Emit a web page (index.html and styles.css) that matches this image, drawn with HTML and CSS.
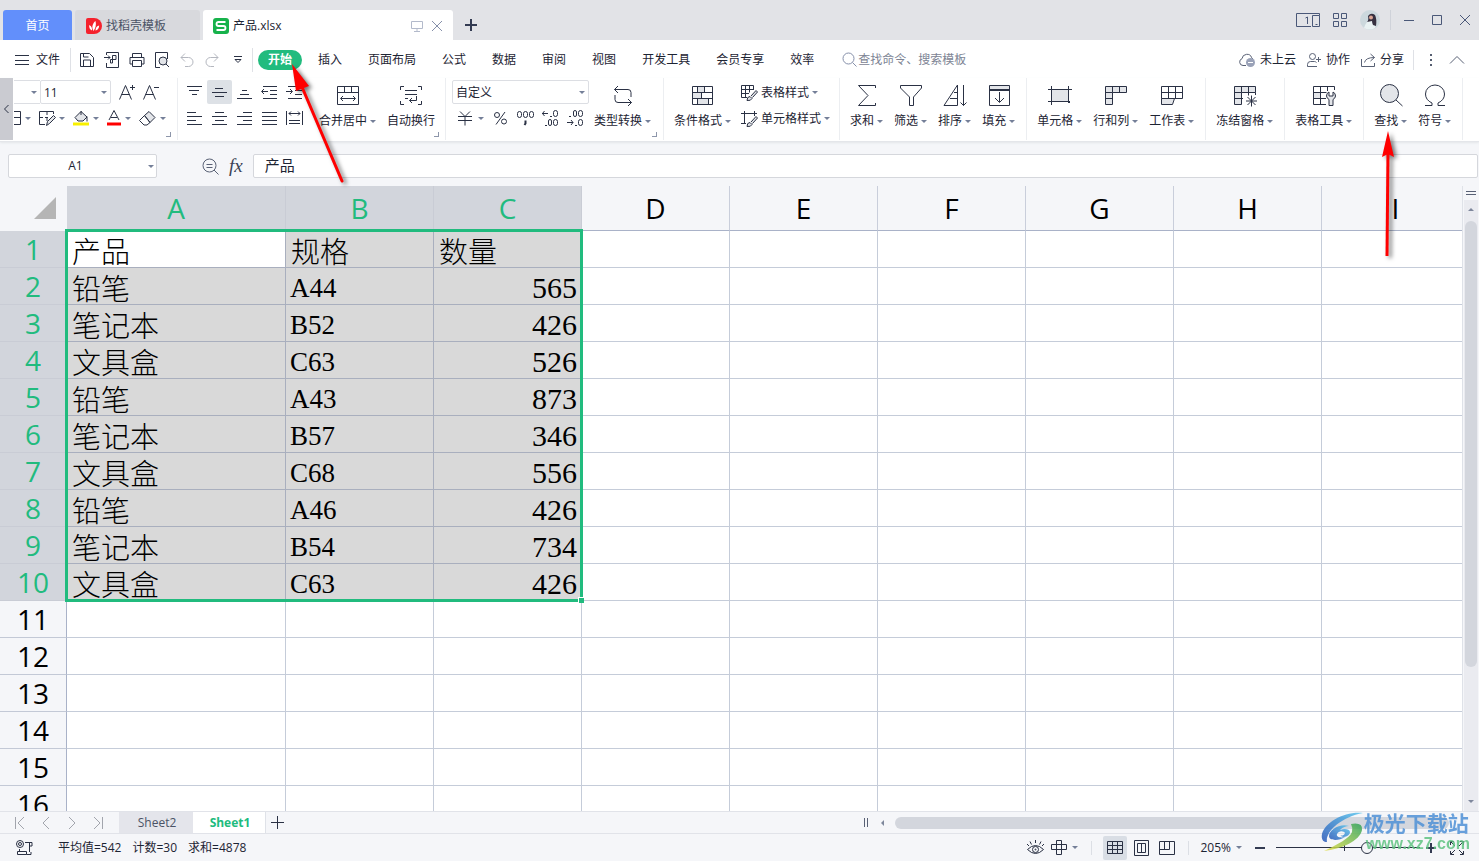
FILE: index.html
```html
<!DOCTYPE html>
<html lang="zh-CN">
<head>
<meta charset="utf-8">
<title>产品.xlsx</title>
<link rel="stylesheet" href="styles.css">
</head>
<body>
<header class="titlebar">
  <button class="doc-tab home">首页</button>
  <button class="doc-tab template"><svg width="16" height="16"><path d="M0 2q0-2 2-2h6a8 8 0 0 1 0 16H2q-2 0-2-2z" fill="#f5222d"/><path d="M7.500 13C5 9 7 5 9.500 3c1 4 0 7-2 10zM6 12.500C3.500 11.500 3 9 3.200 7 5.500 8 6.300 10 6 12.500zM9.500 12.500c0-3 1.500-4.500 3.700-5-.2 3-1.500 4.500-3.700 5z" fill="#fff"/></svg>找稻壳模板</button>
  <div class="doc-tab current">
    <svg width="16" height="16"><rect width="16" height="16" rx="3" fill="#17b24b"/><path d="M12.500 4H5.500q-2 0-2 2t2 2h5q2 0 2 2t-2 2h-7" fill="none" stroke="#fff" stroke-width="1.800"/></svg>
    <span class="doc-name">产品.xlsx</span>
    <svg class="ico pale" width="12" height="12"><path d="M.5 1.500h11v7H.5zM6 8.500v3M3 11.500h6"/></svg>
    <button class="plain" aria-label="关闭标签"><svg class="ico soft" width="12" height="12"><path d="M1 1l10 10M11 1L1 11"/></svg></button>
  </div>
  <button class="plain add-doc" aria-label="新建"><svg class="ico strong" width="12" height="12"><path d="M6 0v12M0 6h12"/></svg></button>
  <div class="window-tools">
    <svg class="ico slate" width="24" height="14"><path d="M15 13.500H.5V.5h23v2M11.500 4v7M9.500 5l2-1M16.500 2.500h7v11h-7zM19.500 11.500h2"/></svg>
    <svg class="ico slate" width="14" height="14"><path d="M.5.500h5v5h-5zM8.500.500h5v5h-5zM.5 8.500h5v5h-5zM8.500 8.500h5v5h-5z"/></svg>
    <svg class="avatar" width="20" height="20"><circle cx="10" cy="10" r="10" fill="#ccd8dd"/><path d="M4 18q2-7 7-8l5 3-1 5q-5 3-11 0z" fill="#e9f2f3"/><path d="M8 6q3-4 7-1 2 4 1 11l-3-1q-1-2-1-4l-5 1q2-2 1-6z" fill="#363040"/><circle cx="11" cy="7.500" r="2" fill="#dba695"/></svg>
    <span class="rule"></span>
    <button class="plain" aria-label="最小化"><svg class="ico slate" width="10" height="10"><path d="M0 5.500h10"/></svg></button>
    <button class="plain" aria-label="最大化"><svg class="ico slate" width="10" height="10"><path d="M.5.500h9v9h-9z"/></svg></button>
    <button class="plain" aria-label="关闭"><svg class="ico slate" width="10" height="10"><path d="M0 0l10 10M10 0L0 10"/></svg></button>
  </div>
</header>

<nav class="menubar">
  <button class="plain file"><svg class="ico" width="14" height="12"><path d="M0 1.500h14M0 6.500h14M0 10.500h14"/></svg>文件</button>
  <div class="quick">
    <button class="plain" aria-label="保存"><svg class="ico" width="16" height="16"><path d="M1.500 14.500v-13h9l4 4v9zM4.500 14v-6h7v6M4.500 2v3h5"/></svg></button>
    <button class="plain" aria-label="输出为PDF"><svg class="ico" width="16" height="16"><path d="M2.500 3V.5h12v15h-12V11M0 5.500h6M4 3.500l2 2-2 2M8.500 11V3.500H12v4H6.500v3.500h2"/></svg></button>
    <button class="plain" aria-label="打印"><svg class="ico" width="16" height="16"><path d="M3.500 5V1.500h9V5M3.500 12h-2.500V5.500h14V12h-2.500M3.500 8.500h9v6h-9z"/></svg></button>
    <button class="plain" aria-label="打印预览"><svg class="ico" width="16" height="16"><path d="M6 15.500H1.500V.5h12V7"/><circle cx="9" cy="9" r="4" fill="#e3e5e9"/><path d="M12 12l3 3"/></svg></button>
    <button class="plain" aria-label="撤销"><svg class="ico faded" width="14" height="14"><path d="M5 .5l-4 4 4 4M1 4.500h7.500a4.500 4.500 0 0 1 0 9H5"/></svg></button>
    <button class="plain" aria-label="恢复"><svg class="ico faded" width="14" height="14"><path d="M9 .5l4 4-4 4M13 4.500H5.500a4.500 4.500 0 0 0 0 9H9"/></svg></button>
    <button class="plain" aria-label="更多"><svg class="ico" width="8" height="8"><path d="M0 .500h8M1 3.500l3 3 3-3z"/></svg></button>
  </div>
  <div class="tabs">
    <button class="tab on">开始</button><button class="tab">插入</button><button class="tab">页面布局</button><button class="tab">公式</button><button class="tab">数据</button><button class="tab">审阅</button><button class="tab">视图</button><button class="tab">开发工具</button><button class="tab">会员专享</button><button class="tab">效率</button>
  </div>
  <label class="search"><svg class="ico soft" width="15" height="15"><circle cx="6.500" cy="6.500" r="5.500"/><path d="M10.500 10.500l4 4"/></svg><input type="text" placeholder="查找命令、搜索模板" aria-label="查找命令"></label>
  <div class="share">
    <button class="plain"><svg class="ico dim" width="17" height="16"><path d="M7 13.500H4a3.500 3.500 0 0 1-1-6.800 5 5 0 0 1 9.700-1l1.300 1.300"/><circle cx="11.500" cy="10.500" r="4.500" fill="#9aa2b8" stroke="none"/><path d="M9 10.500h5" stroke="#fff"/></svg>未上云</button>
    <button class="plain"><svg class="ico dim" width="15" height="14"><circle cx="5.500" cy="3.500" r="3"/><path d="M10 13.500H.5v-2q0-3 3-3h4q1 0 2 1M9 6.500h5M11.500 4v5"/></svg>协作</button>
    <button class="plain"><svg class="ico dim" width="15" height="14"><path d="M.5 6v7.500h13V10M3.500 9.500q1-5 10-5M9.500 1l4 3.500-4 3.500"/></svg>分享</button>
  </div>
  <div class="view-tools">
    <svg width="2" height="12" fill="#555d70"><path d="M0 0h2v2H0zM0 5h2v2H0zM0 10h2v2H0z"/></svg>
    <button class="plain" aria-label="收起功能区"><svg class="ico dim" width="14" height="8"><path d="M0 7.500l7-7 7 7"/></svg></button>
  </div>
</nav>

<section class="ribbon">
  <button class="scroll-left" aria-label="向左滚动"><svg class="ico" width="5" height="8"><path d="M4.500 0l-4 4 4 4"/></svg></button>
  <div class="group font-group">
    <div class="line">
      <span class="combo cut"><i class="caret"></i></span>
      <button class="combo size">11<i class="caret"></i></button>
      <button class="plain grow" aria-label="增大字号"><svg class="ico" width="16" height="16"><path d="M.5 15.500L6.500 1.500l6 14M2.500 10.500h8M11 3.500h5M13.500 1v5"/></svg></button>
      <button class="plain" aria-label="减小字号"><svg class="ico" width="16" height="16"><path d="M.5 15.500L6.500 1.500l6 14M2.500 10.500h8M11 3.500h5"/></svg></button>
    </div>
    <div class="line drops">
      <button class="plain" aria-label="边框"><svg class="ico" width="7" height="14"><path d="M0 .5h6.500v13H0M0 6.500h6"/></svg><i class="caret"></i></button>
      <button class="plain" aria-label="绘制边框"><svg class="ico" width="16" height="16"><path d="M6 14.500H.5v-13h14V4M8 2v3M8 8v3M1 7.500h3M6 7.500h3"/><path d="M7.500 15.500l1-4 6-6 2 2-6 6z" fill="#e3e5e9"/></svg><i class="caret"></i></button>
      <button class="plain" aria-label="填充颜色"><svg class="ico" width="16" height="16"><path d="M8 1.500l6 5.500-4 4H5L2 7.500zM8 1v4M14 6.500v5" fill="#e3e5e9"/><path d="M0 14h16" stroke="#f8f000" stroke-width="3"/></svg><i class="caret"></i></button>
      <button class="plain" aria-label="字体颜色"><svg class="ico" width="14" height="16"><path d="M2 10L7 .5l5 9.500M4 7.500h6"/><path d="M0 14h14" stroke="#f00" stroke-width="3"/></svg><i class="caret"></i></button>
      <button class="plain" aria-label="清除"><svg class="ico" width="17" height="16"><path d="M5.500 5.500L10 1.500l6 6-5 5z" fill="#e3e5e9"/><path d="M5.500 5.500l5.500 7-3 2.500H5L.500 10.500z"/></svg><i class="caret"></i></button>
    </div>
    <i class="corner"></i>
  </div>
  <div class="group align-group">
    <div class="stack">
      <div class="line">
        <button class="cell-btn" aria-label="顶端对齐"><svg class="ico" width="15" height="16"><path d="M0 2.500h15M2 6.500h10M5 10.500h5"/></svg></button>
        <button class="cell-btn on" aria-label="垂直居中"><svg class="ico" width="15" height="16"><path d="M3 4.500h8M0 8.500h15M3 12.500h9"/></svg></button>
        <button class="cell-btn" aria-label="底端对齐"><svg class="ico" width="15" height="16"><path d="M5 6.500h5M3 10.500h9M0 14.500h15"/></svg></button>
        <button class="cell-btn" aria-label="减少缩进"><svg class="ico" width="17" height="16"><path d="M2 2.500h14M9 6.500h7M9 10.500h7M2 14.500h14M1 7.500h6M3 5l-2.500 2.500L3 10"/></svg></button>
        <button class="cell-btn" aria-label="增加缩进"><svg class="ico" width="17" height="16"><path d="M2 2.500h14M9 6.500h7M9 10.500h7M2 14.500h14M0 7.500h6M4 5l2.500 2.500L4 10"/></svg></button>
      </div>
      <div class="line">
        <button class="cell-btn" aria-label="左对齐"><svg class="ico" width="15" height="16"><path d="M0 2.500h9M0 6.500h15M0 10.500h9M0 14.500h15"/></svg></button>
        <button class="cell-btn" aria-label="居中"><svg class="ico" width="15" height="16"><path d="M3 2.500h9M0 6.500h15M3 10.500h9M0 14.500h15"/></svg></button>
        <button class="cell-btn" aria-label="右对齐"><svg class="ico" width="15" height="16"><path d="M6 2.500h9M0 6.500h15M6 10.500h9M0 14.500h15"/></svg></button>
        <button class="cell-btn" aria-label="两端对齐"><svg class="ico" width="15" height="16"><path d="M0 2.500h15M0 6.500h15M0 10.500h15M0 14.500h15"/></svg></button>
        <button class="cell-btn" aria-label="分散对齐"><svg class="ico" width="17" height="16"><path d="M.5 1v14M16.500 1v14M3 3.500h11M5 1.500l-2 2 2 2M12 1.500l2 2-2 2M3 10.500h11M3 13.500h11"/></svg></button>
      </div>
    </div>
    <button class="big"><svg class="ico" width="24" height="24"><path d="M1.500 2.500h21v18h-21zM1.500 8.500h21M8.500 2.500v6M15.500 2.500v6M5 14.500h14M7 12l-2.500 2.500L7 17M17 12l2.500 2.500L17 17"/></svg><span>合并居中<i class="caret"></i></span></button>
    <button class="big"><svg class="ico" width="24" height="24"><path d="M5 2.500H1.500V6M19 2.500h3.500V6M1.500 17v3.500H5M22.500 17v3.500H19M6 6.500h12M6 10.500h12M6 14.500h3M17.500 12v4.500h-7M13 14l-2.500 2.500L13 19"/></svg><span>自动换行</span></button>
    <i class="corner"></i>
  </div>
  <div class="group number-group">
    <div class="stack">
      <button class="combo format">自定义<i class="caret"></i></button>
      <div class="line">
        <button class="plain money" aria-label="货币"><svg class="ico" width="14" height="16"><path d="M2 1.500l5 5 5-5M7 6v9.500M0 6.500h14M0 10.500h14"/></svg><i class="caret"></i></button>
        <button class="cell-btn" aria-label="百分比"><svg class="ico" width="13" height="14"><circle cx="3" cy="4" r="2.500"/><circle cx="10" cy="10.500" r="2.500"/><path d="M11 1L2 13.500"/></svg></button>
        <button class="cell-btn" aria-label="千位分隔"><svg class="ico" width="17" height="16"><rect x=".5" y="1.500" width="4" height="6" rx="2"/><rect x="6.500" y="1.500" width="4" height="6" rx="2"/><rect x="12.500" y="1.500" width="4" height="6" rx="2"/><path d="M8.500 10.500v3l-1 1.500" stroke-width="2"/></svg></button>
        <button class="cell-btn" aria-label="增加小数位"><svg class="ico" width="17" height="16"><path d="M0 3.500h6M2.500 1L.5 3.500l2 2.500M8 6.500h2M3 15.500h2"/><rect x="11.500" y=".5" width="4" height="6" rx="2"/><rect x="6.500" y="9.500" width="3" height="6" rx="1.500"/><rect x="11.500" y="9.500" width="4" height="6" rx="2"/></svg></button>
        <button class="cell-btn" aria-label="减少小数位"><svg class="ico" width="17" height="16"><path d="M0 12.500h6M4 10l2 2.500-2 2.500M2 6.500h2M8 15.500h2"/><rect x="6.500" y=".5" width="3" height="6" rx="1.500"/><rect x="11.500" y=".5" width="4" height="6" rx="2"/><rect x="11.500" y="9.500" width="4" height="6" rx="2"/></svg></button>
      </div>
    </div>
    <button class="big"><svg class="ico" width="24" height="24"><path d="M7 2L3.500 5.500 7 9M3.500 5.500H17q3 0 3 3V13M17 15l3.500 3.500L17 22M20.500 18.500H7q-3 0-3-3V11"/></svg><span>类型转换<i class="caret"></i></span></button>
    <i class="corner"></i>
  </div>
  <div class="group style-group">
    <button class="big"><svg class="ico" width="24" height="24"><path d="M7 2.500h6v6H7zM1.500 8.500h9v6h-9zM7 14.500h10v6H7z" fill="#e3e5e9" stroke="none"/><path d="M1.500 2.500h20v18h-20zM1.500 8.500h20M1.500 14.500h20M6.500 2.500v6M13.500 2.500v6M10.500 8.500v6M6.500 14.500v6M17.500 14.500v6"/></svg><span>条件格式<i class="caret"></i></span></button>
    <div class="stack styles-stack">
      <button class="plain wide"><svg class="ico" width="17" height="16"><path d="M6 12.500H.5V.5h12V5M.5 4.500h12M.5 8.500H8M4.500.500v12M8.500.500v7"/><path d="M6 15.500q0-4 3-4l2 2q-1 2.500-5 2zM10 11l5-5.500 1.500 1.500-5 5.500" fill="#e3e5e9"/></svg>表格样式<i class="caret"></i></button>
      <button class="plain wide"><svg class="ico" width="17" height="16"><path d="M3.500 0v12.500M0 2.500h16M13.500 0v5M0 12.500h5"/><path d="M6 15.500q0-4 3-4l2 2q-1 2.500-5 2zM10 11l5-5.500 1.500 1.500-5 5.500" fill="#e3e5e9"/></svg>单元格样式<i class="caret"></i></button>
    </div>
  </div>
  <div class="group">
    <button class="big"><svg class="ico" width="24" height="24"><path d="M20.500 4V1.500h-17L13 11.500l-9.500 10h17V19"/></svg><span>求和<i class="caret"></i></span></button>
    <button class="big"><svg class="ico" width="24" height="24"><path d="M1.500 1.500h21V4L14.500 13v8.500h-4V13L1.500 4z"/></svg><span>筛选<i class="caret"></i></span></button>
    <button class="big"><svg class="ico" width="24" height="24"><path d="M14.500 1v20.500H1L14.500 1zM11 8.500h3M7 14.500h7M20.500 1v20.500M17.500 18.500l3 3 3-3"/></svg><span>排序<i class="caret"></i></span></button>
    <button class="big"><svg class="ico" width="24" height="24"><path d="M2.500 1.500h20v5h-20z" fill="#e3e5e9"/><path d="M2.500 5.500h20v16h-20zM12.500 8v10M8 14l4.500 4.500L17 14"/></svg><span>填充<i class="caret"></i></span></button>
  </div>
  <div class="group">
    <button class="big"><svg class="ico" width="24" height="24"><path d="M3.500 5.500h17v12h-17z" fill="#e3e5e9"/><path d="M3.500 2v19M20.500 2v13M0 5.500h24M0 17.500h18"/><path d="M20 17h2v2h-2z" fill="#2a3144" stroke="none"/></svg><span>单元格<i class="caret"></i></span></button>
    <button class="big"><svg class="ico" width="24" height="24"><path d="M1.500 2.500h21v6h-14v12h-7z" fill="#e3e5e9"/><path d="M1.500 8.500h7v-6M15.500 2.500v6M1.500 14.500h7"/></svg><span>行和列<i class="caret"></i></span></button>
    <button class="big"><svg class="ico" width="24" height="24"><path d="M1.500 2.500h21v12h-21zM8.500 2.500v12M15.500 2.500v12M1.500 8.500h21"/><path d="M1.500 14.500h13l-2 6h-11z" fill="#e3e5e9"/></svg><span>工作表<i class="caret"></i></span></button>
  </div>
  <div class="group">
    <button class="big"><svg class="ico" width="24" height="24"><path d="M1.500 2.500h21v6h-14v12h-7z" fill="#e3e5e9"/><path d="M22.500 8.500V11M1.500 8.500h7v-6M15.500 2.500v9M1.500 14.500H10M18.500 11.500v11M13 17h11M14.500 13l8 8M22.500 13l-8 8"/></svg><span>冻结窗格<i class="caret"></i></span></button>
  </div>
  <div class="group">
    <button class="big"><svg class="ico" width="24" height="24"><path d="M1.500 8.500h7v6h-7z" fill="#e3e5e9"/><path d="M14 20.500H1.500v-18h21V6M1.500 8.500h13M1.500 14.500H14M8.500 2.500v18M15.500 2.500V7"/><path d="M17 8q-2.500 1-2.500 4 0 2 2.500 3.500v6h4v-6q2.500-1.500 2.500-3.500 0-3-2.500-4v4h-4z" fill="#e3e5e9"/></svg><span>表格工具<i class="caret"></i></span></button>
  </div>
  <div class="group">
    <button class="big"><svg class="ico" width="24" height="24"><circle cx="10.500" cy="9.500" r="9" fill="#e3e5e9"/><path d="M17 16l6.500 6"/></svg><span>查找<i class="caret"></i></span></button>
    <button class="big"><svg class="ico" width="24" height="24"><path d="M2 21.500h7v-2.500Q2.500 16 2.500 10a9.500 9 0 0 1 19 0q0 6-6.500 9v2.500h7"/></svg><span>符号<i class="caret"></i></span></button>
  </div>
</section>

<section class="formula-bar">
  <div class="name-box"><input type="text" value="A1" aria-label="名称框"><i class="caret"></i></div>
  <div class="fx-tools">
    <svg class="ico dim" width="17" height="17"><circle cx="7.500" cy="7.500" r="6.500"/><path d="M12 12l4.500 4.500M4.500 6.500h6M4.500 9.500h6"/></svg>
    <button class="plain fx">fx</button>
  </div>
  <input class="formula" type="text" value="产品" aria-label="编辑栏">
</section>

<main class="workspace">
  <div class="sheet">
    <table class="grid">
      <colgroup><col class="c-head"><col class="c-a"><col class="c-n"><col class="c-n"><col class="c-n"><col class="c-n"><col class="c-n"><col class="c-n"><col class="c-n"><col class="c-n"></colgroup>
      <thead><tr><th class="all"><svg width="22" height="22"><path d="M22 0v22H0z" fill="#b5b5b5"/></svg></th><th class="sel">A</th><th class="sel">B</th><th class="sel">C</th><th>D</th><th>E</th><th>F</th><th>G</th><th>H</th><th>I</th></tr></thead>
      <tbody class="picked">
        <tr><th>1</th><td class="active">产品</td><td>规格</td><td>数量</td><td></td><td></td><td></td><td></td><td></td><td></td></tr>
        <tr><th>2</th><td>铅笔</td><td class="code">A44</td><td class="num">565</td><td></td><td></td><td></td><td></td><td></td><td></td></tr>
        <tr><th>3</th><td>笔记本</td><td class="code">B52</td><td class="num">426</td><td></td><td></td><td></td><td></td><td></td><td></td></tr>
        <tr><th>4</th><td>文具盒</td><td class="code">C63</td><td class="num">526</td><td></td><td></td><td></td><td></td><td></td><td></td></tr>
        <tr><th>5</th><td>铅笔</td><td class="code">A43</td><td class="num">873</td><td></td><td></td><td></td><td></td><td></td><td></td></tr>
        <tr><th>6</th><td>笔记本</td><td class="code">B57</td><td class="num">346</td><td></td><td></td><td></td><td></td><td></td><td></td></tr>
        <tr><th>7</th><td>文具盒</td><td class="code">C68</td><td class="num">556</td><td></td><td></td><td></td><td></td><td></td><td></td></tr>
        <tr><th>8</th><td>铅笔</td><td class="code">A46</td><td class="num">426</td><td></td><td></td><td></td><td></td><td></td><td></td></tr>
        <tr><th>9</th><td>笔记本</td><td class="code">B54</td><td class="num">734</td><td></td><td></td><td></td><td></td><td></td><td></td></tr>
        <tr><th>10</th><td>文具盒</td><td class="code">C63</td><td class="num">426</td><td></td><td></td><td></td><td></td><td></td><td></td></tr>
      </tbody>
      <tbody>
        <tr><th>11</th><td></td><td></td><td></td><td></td><td></td><td></td><td></td><td></td><td></td></tr>
        <tr><th>12</th><td></td><td></td><td></td><td></td><td></td><td></td><td></td><td></td><td></td></tr>
        <tr><th>13</th><td></td><td></td><td></td><td></td><td></td><td></td><td></td><td></td><td></td></tr>
        <tr><th>14</th><td></td><td></td><td></td><td></td><td></td><td></td><td></td><td></td><td></td></tr>
        <tr><th>15</th><td></td><td></td><td></td><td></td><td></td><td></td><td></td><td></td><td></td></tr>
        <tr><th>16</th><td></td><td></td><td></td><td></td><td></td><td></td><td></td><td></td><td></td></tr>
      </tbody>
    </table>
    <div class="selection"><i class="fill-handle"></i></div>
  </div>
  <div class="vscroll">
    <svg class="ico dim" width="10" height="14"><path d="M0 5.500h10M0 8.500h10"/></svg>
    <div class="vtrack"><i class="arrow up"></i><div class="vthumb"></div><i class="arrow down"></i></div>
  </div>
</main>

<section class="sheet-bar">
  <div class="sheet-nav">
    <button class="plain" aria-label="第一张"><svg class="ico faint" width="10" height="12"><path d="M.5 0v12M9 0L3 6l6 6"/></svg></button>
    <button class="plain" aria-label="上一张"><svg class="ico faint" width="10" height="12"><path d="M8 0L2 6l6 6"/></svg></button>
    <button class="plain" aria-label="下一张"><svg class="ico faint" width="10" height="12"><path d="M2 0l6 6-6 6"/></svg></button>
    <button class="plain" aria-label="最后一张"><svg class="ico faint" width="10" height="12"><path d="M9.500 0v12M1 0l6 6-6 6"/></svg></button>
  </div>
  <button class="sheet-tab">Sheet2</button><button class="sheet-tab on">Sheet1</button>
  <button class="plain add-sheet" aria-label="新建工作表"><svg class="ico" width="13" height="13"><path d="M6.500 0v13M0 6.500h13"/></svg></button>
  <div class="hscroll"><svg class="ico dim" width="4" height="9"><path d="M.5 0v9M3.500 0v9"/></svg><i class="arrow left"></i><div class="hthumb"></div></div>
</section>

<footer class="status">
  <svg class="ico" width="17" height="16"><circle cx="4" cy="4" r="3.500"/><circle cx="4" cy="4" r="1.500"/><path d="M9 2.500h7V6h-2.500M13.500 3v9M3.500 9v2.500M1.500 11.500h9v3h4.500v-2.500M1.500 11.500v3h9"/></svg>
  <span class="stats"><span>平均值=542</span><span>计数=30</span><span>求和=4878</span></span>
  <div class="status-tools">
    <svg class="ico" width="17" height="16"><path d="M.5 9.500q8-8 16 0-8 8-16 0zM8.500 0v3M3 1.500l1.500 3M14 1.500l-1.500 3M0 4l2 2M17 4l-2 2"/><circle cx="8.500" cy="9.500" r="3"/><circle cx="8.500" cy="9.500" r=".5"/></svg>
    <button class="plain reading" aria-label="阅读模式"><svg class="ico" width="16" height="15"><path d="M5.500.500h5v14h-5zM.5 4.500h15v5H.5z"/></svg><i class="caret"></i></button>
    <span class="rule"></span>
    <div class="views">
      <button class="view on" aria-label="普通视图"><svg class="ico" width="16" height="14"><path d="M.5.500h15v12H.5zM.5 4.500h15M.5 8.500h15M5.500.500v12M10.500.500v12"/></svg></button>
      <button class="view" aria-label="分页预览"><svg class="ico" width="15" height="16"><path d="M.5.500h14v15H.5zM3.500 3.500h8v9h-8zM7.500 3.500v9"/></svg></button>
      <button class="view" aria-label="页面布局"><svg class="ico" width="16" height="14"><path d="M.5.500h15v13H.5zM.5 8.500h10v-8M5.500.500v8"/></svg></button>
    </div>
    <span class="rule"></span>
    <button class="plain zoom">205%<i class="caret"></i></button>
    <button class="plain" aria-label="缩小"><svg class="ico strong" width="10" height="10"><path d="M0 5h10"/></svg></button>
    <input class="slider" type="range" min="10" max="400" value="260" aria-label="缩放">
    <button class="plain zoom-in" aria-label="放大"><svg class="ico strong" width="10" height="10"><path d="M5 0v10M0 5h10"/></svg></button>
    <button class="plain full" aria-label="全屏"><svg class="ico" width="14" height="14"><path d="M.5 4V.5H4M10 .5h3.500V4M13.500 10v3.500H10M4 13.500H.5V10M1 1l4 4M13 1L9 5M13 13L9 9M1 13l4-4"/></svg></button>
  </div>
</footer>

<svg class="pointer pointer-tab" width="64" height="126"><path d="M13 26l40 94" stroke="#f00" stroke-width="3" stroke-linecap="round"/><path d="M3 3l17 22-13 5z" fill="#f00"/></svg>
<svg class="pointer pointer-find" width="24" height="134"><path d="M10 20L9 126" stroke="#f00" stroke-width="3"/><path d="M10 1l6 26-6-3-6 3z" fill="#f00"/></svg>

<div class="watermark">
  <svg width="42" height="40" viewBox="0 0 42 40">
    <defs><linearGradient id="wb" x1="0" y1="1" x2="1" y2="0"><stop offset="0" stop-color="#2857b8"/><stop offset="1" stop-color="#58c5ee"/></linearGradient><linearGradient id="wg" x1="0" y1="1" x2="1" y2="0"><stop offset="0" stop-color="#e6df45"/><stop offset="1" stop-color="#2fa35b"/></linearGradient></defs>
    <path d="M42 1C24-1 4 10 1 22c-1 5 1 8 5 8C4 20 20 5 42 1z" fill="url(#wb)"/>
    <path d="M30 12q12-2 11 6C39 29 20 37 3 39 17 32 29 26 31 20q1-4-1-8z" fill="url(#wg)"/>
    <path d="M28 14c-9-3-20 4-20 10 0 5 10 5 16 1-5 1-9 0-8-3 2-4 7-3 8-1-1 3-4 3-5 2 3 4 10 1 10-3 0-3-6-4-10-2 3-3 6-4 9-4z" fill="url(#wb)"/>
  </svg>
  <div class="wm-text"><span class="wm-name">极光下载站</span><span class="wm-site">www.xz7.com</span></div>
</div>
</body>
</html>
```
FILE: styles.css
```css
* { box-sizing: border-box; }
html, body { height: 100%; }
body {
  margin: 0;
  display: flex;
  flex-direction: column;
  position: relative;
  overflow: hidden;
  background: #f5f6f9;
  color: #1d2433;
  font: 12px/16px "Open Sans", "Noto Sans CJK SC", sans-serif;
}
button, input { font: inherit; color: inherit; margin: 0; padding: 0; border: 0; background: none; border-radius: 0; }
input { outline: 0; min-width: 0; }
svg { display: block; flex: none; }

.ico { fill: none; stroke: #2a3144; overflow: visible; }
.ico.strong { stroke: #333b52; stroke-width: 2; }
.ico.slate { stroke: #4a5878; }
.ico.soft { stroke: #8690aa; }
.ico.pale { stroke: #b3bacb; }
.ico.dim { stroke: #596175; }
.ico.faded { stroke: #b4b7bf; }
.ico.faint { stroke: #a2a5ad; }
.plain { display: flex; align-items: center; white-space: nowrap; }
.rule { width: 1px; height: 20px; background: #cfd2d9; }
.caret { flex: none; display: inline-block; border: 3px solid transparent; border-top-color: #747f98; border-bottom: 0; }

/* title bar */
.titlebar { flex: none; height: 40px; display: flex; align-items: flex-end; gap: 3px; padding-left: 3px; background: #e2e3e7; }
.doc-tab { height: 30px; display: flex; align-items: center; padding-top: 2px; border-radius: 3px 3px 0 0; }
.doc-tab.home { width: 69px; justify-content: center; background: #628ffb; color: #fff; }
.doc-tab.template { width: 125px; gap: 4px; padding-left: 11px; background: #d8d9dd; color: #4b5366; }
.doc-tab.current { width: 250px; gap: 4px; padding: 2px 10px 0; background: #fff; }
.doc-name { flex: 1; }
.doc-tab.current .plain { margin-left: 4px; }
.add-doc { height: 30px; padding: 0 9px; }
.window-tools { flex: 1; height: 40px; display: flex; justify-content: flex-end; align-items: center; gap: 13px; padding-right: 9px; }
.window-tools .rule { height: 20px; margin-left: -3px; }
.window-tools .plain + .plain { margin-left: 5px; }

/* menu bar */
.menubar { flex: none; height: 38px; display: flex; align-items: center; background: #fff; padding: 1px 15px 0; }
.file { height: 24px; gap: 7px; padding-right: 10px; border-right: 1px solid #dfe1e6; }
.quick { height: 24px; display: flex; align-items: center; gap: 9px; padding: 0 9px 0 8px; border-right: 1px solid #dfe1e6; }
.quick .plain:nth-child(n+5) { padding: 0 1px; }
.quick .plain:last-child { margin-left: 4px; }
.tabs { display: flex; gap: 6px; margin-left: 5px; }
.tab { height: 20px; padding: 0 10px; border-radius: 10px; white-space: nowrap; }
.tab.on { background: #21bb7e; color: #fff; font-weight: 700; }
.search { flex: 1; display: flex; align-items: center; gap: 1px; margin-left: 18px; }
.search input { width: 140px; }
.search input::placeholder { color: #7d8494; opacity: 1; }
.share { height: 20px; display: flex; gap: 11px; padding-right: 9px; border-right: 1px solid #dfe1e6; }
.share .plain { gap: 4px; }
.view-tools { display: flex; align-items: center; gap: 18px; padding-left: 16px; }

/* ribbon */
.ribbon { flex: none; height: 64px; display: flex; background: #fff; border-bottom: 1px solid #e4e6ea; box-shadow: 0 1px 2px #e4e6ea; }
.scroll-left { width: 14px; height: 62px; display: flex; align-items: center; justify-content: center; background: #cacbd1; border-right: 1px solid #fff; }
.group { position: relative; flex: none; height: 62px; display: flex; gap: 11px; padding: 2px 11px 0 10px; border-right: 1px solid #eceef1; }
.corner { position: absolute; right: 6px; bottom: 3px; width: 5px; height: 5px; border: solid #8d96aa; border-width: 0 1px 1px 0; }
.line { height: 24px; display: flex; align-items: center; }
.stack { display: flex; flex-direction: column; gap: 2px; }
.combo { height: 24px; display: flex; align-items: center; justify-content: space-between; padding: 1px 3px 0; border: 1px solid #dcdee3; border-radius: 2px; }
.combo.cut { width: 26px; justify-content: flex-end; border-width: 1px 0; border-radius: 0; }
.combo.size { width: 71px; }
.combo.format { width: 137px; }
.font-group { flex-direction: column; gap: 2px; padding: 2px 11px 0 0; width: 164px; }
.font-group .grow { margin: 0 8px; }
.drops { justify-content: space-between; }
.drops .plain { gap: 4px; }
.cell-btn { width: 25px; height: 24px; display: flex; align-items: center; justify-content: center; }
.cell-btn.on { background: #dde1e6; border-radius: 2px; }
.align-group { padding: 2px 10px 0 4px; }
.align-group .big:nth-of-type(1) { margin-left: 1px; }
.number-group { gap: 5px; padding: 2px 12px 0 6px; }
.money { width: 36px; gap: 6px; padding-left: 6px; }
.big { display: flex; flex-direction: column; align-items: center; gap: 5px; padding-top: 4px; white-space: nowrap; }
.big span { display: flex; align-items: center; gap: 3px; line-height: 16px; }
.style-group { gap: 10px; padding-right: 9px; }
.wide { height: 24px; gap: 3px; padding-top: 1px; }
.styles-stack { align-items: flex-start; }

/* formula bar */
.formula-bar { flex: none; height: 44px; display: flex; align-items: center; padding: 4px 1px 0 8px; }
.name-box { width: 149px; height: 24px; display: flex; align-items: center; background: #fff; border: 1px solid #d5d7dc; border-radius: 2px; padding-right: 2px; }
.name-box input { flex: 1; padding-right: 6px; text-align: center; }
.fx-tools { display: flex; align-items: center; gap: 10px; padding: 0 10px 0 45px; }
.fx { font: italic 19px/20px "Liberation Serif", serif; color: #3b4254; }
.formula { flex: 1; height: 24px; padding: 0 11px 3px; background: #fff; border: 1px solid #d5d7dc; border-radius: 2px; font-size: 15px; }

/* sheet */
.workspace { flex: 1; min-height: 0; display: flex; }
.sheet { position: relative; flex: 1; min-width: 0; overflow: hidden; background: #fff; border-right: 1px solid #dfe2e8; }
.grid { width: 0; table-layout: fixed; border-collapse: separate; border-spacing: 0; }
.c-head { width: 67px; }
.c-a { width: 219px; }
.c-n { width: 148px; }
.grid th { height: 37px; padding: 0; background: #f5f6f9; border: solid #c3c9d6; border-width: 0 1px 1px 0; font-size: 28px; line-height: 36px; font-weight: 400; color: #000; }
.grid thead th { height: 45px; line-height: 44px; border-color: #a9b2c8; border-right-color: #c9cedb; }
.grid thead .sel { background: #d2d5dc; color: #21bb7e; border-right-color: #c9ccd5; }
.grid thead .all { border-color: #f5f6f9; }
.all svg { margin: 0 0 0 34px; }
.grid tbody th { border-right-color: #a9b2c8; }
.grid .picked th { background: #d2d5dc; color: #21bb7e; border-bottom-color: #c9ccd5; }
.grid td { height: 37px; padding: 2px 4px 0 5px; border: solid #c5ccd9; border-width: 0 1px 1px 0; font: 300 29px/34px "Noto Sans CJK SC", sans-serif; color: #000; white-space: nowrap; }
.picked td:nth-child(-n+4) { background: #d9d9d9; border-color: #a9afbe; }
.picked .active.active { background: #fff; }
.grid .code, .grid .num { padding: 4px 4px 0; font: 30px/32px "Liberation Serif", serif; }
.grid .code { font-size: 27px; }
.grid .num { text-align: right; }
.selection { position: absolute; left: 65px; top: 43px; width: 518px; height: 373px; border: 3px solid #21bb7e; }
.fill-handle { position: absolute; right: -4px; bottom: -4px; width: 6px; height: 6px; background: #21bb7e; border: solid #fff; border-width: 1px 0 0 1px; }
.vscroll { flex: none; width: 16px; display: flex; flex-direction: column; align-items: center; }
.vtrack { flex: 1; width: 14px; display: flex; flex-direction: column; align-items: center; background: #eaebf0; padding: 8px 1px 8px; }
.vthumb { flex: none; width: 12px; height: 75%; margin: 10px 0 auto; border-radius: 6px; background: #d3d6dd; }
.arrow { width: 0; height: 0; border: 3px solid transparent; }
.arrow.up { border-top: 0; border-bottom-color: #7e879c; }
.arrow.down { border-bottom: 0; border-top-color: #7e879c; }
.arrow.left { border-left: 0; border-right-color: #7e879c; }

/* sheet tabs */
.sheet-bar { flex: none; height: 22px; display: flex; align-items: center; border-top: 1px solid #e1e3e9; }
.sheet-nav { display: flex; gap: 16px; padding: 0 16px 0 15px; }
.sheet-tab { height: 22px; width: 74px; padding-left: 2px; text-align: center; background: #e4e5eb; color: #4b5366; }
.sheet-tab.on { width: 73px; background: #fff; color: #21bb7e; font-weight: 700; border-right: 1px solid #dfe2e8; }
.add-sheet { padding: 0 5px; }
.hscroll { flex: 0 1 615px; display: flex; align-items: center; margin-left: auto; padding-right: 30px; }
.hscroll .arrow { margin: 0 11px 0 13px; }
.hthumb { flex: 1; height: 12px; border-radius: 6px; background: #d3d6dd; }

/* status bar */
.status { flex: none; height: 28px; display: flex; align-items: center; padding: 0 15px 0 16px; border-top: 1px solid #e1e3e9; }
.stats { display: flex; gap: 11px; padding-left: 25px; }
.status-tools { flex: 1; display: flex; align-items: center; justify-content: flex-end; gap: 11px; }
.status-tools .rule { height: 14px; background: #dcdfe5; }
.reading { gap: 5px; margin: 0 2px 0 -4px; }
.views { display: flex; gap: 2px; margin-right: -2px; }
.view { width: 24px; height: 24px; display: flex; align-items: center; justify-content: center; }
.view.on { background: #d9dee5; border-radius: 2px; }
.zoom { gap: 5px; margin-right: 2px; }
.slider { appearance: none; width: 144px; height: 14px; background: linear-gradient(#2a3144, #2a3144) center / 100% 1px no-repeat, linear-gradient(#2a3144, #2a3144) 68px center / 1px 6px no-repeat; }
.slider::-webkit-slider-thumb { appearance: none; width: 12px; height: 12px; border: 1px solid #2a3144; border-radius: 50%; background: #f5f6f9; }
.zoom-in { margin-left: -5px; }
.full { margin-left: 3px; }

/* overlays */
.pointer { position: absolute; fill: none; overflow: visible; filter: drop-shadow(3px 2px 2px #0008); pointer-events: none; }
.pointer-tab { left: 289px; top: 61px; }
.pointer-find { left: 1378px; top: 130px; }
.watermark { position: absolute; right: 9px; bottom: 7px; display: flex; align-items: center; opacity: .85; pointer-events: none; }
.wm-text { display: flex; flex-direction: column; margin-left: 1px; }
.wm-name { font: 700 21px/24px "Noto Sans CJK SC", sans-serif; color: #4f91d6; }
.wm-site { margin-left: 2px; font: 700 16px/20px "Liberation Sans", sans-serif; color: #62c483; }
```
